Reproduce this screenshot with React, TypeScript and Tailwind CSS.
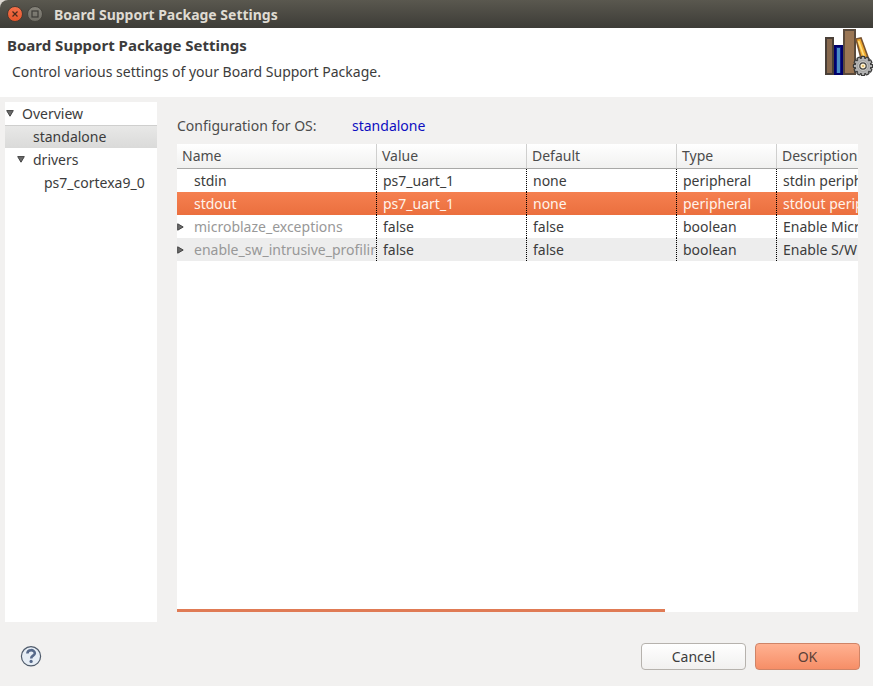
import React from "react";

type Setting = {
  name: string;
  value: string;
  fallback: string;
  type: string;
  description: string;
  expandable?: boolean;
  selected?: boolean;
};

const settings: Setting[] = [
  { name: "stdin", value: "ps7_uart_1", fallback: "none", type: "peripheral", description: "stdin peripheral" },
  { name: "stdout", value: "ps7_uart_1", fallback: "none", type: "peripheral", description: "stdout peripheral", selected: true },
  { name: "microblaze_exceptions", value: "false", fallback: "false", type: "boolean", description: "Enable MicroBlaze Exceptions", expandable: true },
  { name: "enable_sw_intrusive_profiling", value: "false", fallback: "false", type: "boolean", description: "Enable S/W Intrusive Profiling on Hardware Targets", expandable: true },
];

const columns = ["Name", "Value", "Default", "Type", "Description"];

function DownArrow() {
  return (
    <svg width="8" height="8" viewBox="0 0 8 8" aria-hidden="true">
      <path d="M0.7 0.6 H7.3 L4 6.2 Z" fill="#6b6b6b" stroke="#444" strokeWidth="1" strokeLinejoin="round" />
    </svg>
  );
}

function RightArrow() {
  return (
    <svg width="7" height="8" viewBox="0 0 7 8" aria-hidden="true">
      <path d="M0.7 0.8 V7.2 L6.2 4 Z" fill="#6b6b6b" stroke="#444" strokeWidth="1" strokeLinejoin="round" />
    </svg>
  );
}

function BooksIcon() {
  const teeth = [0, 30, 60, 90, 120, 150, 180, 210, 240, 270, 300, 330];
  return (
    <svg width="48" height="48" viewBox="0 0 48 48" aria-hidden="true">
      <rect x="1" y="10" width="7" height="36" fill="#86684e" stroke="#4a4038" strokeWidth="2" />
      <rect x="10" y="18" width="7" height="28" fill="#0a1c8c" stroke="#00006a" strokeWidth="2" />
      <rect x="12" y="20" width="3" height="25" fill="#4a8cc4" />
      <rect x="19" y="2" width="11" height="44" fill="#9a7654" stroke="#5a4a3c" strokeWidth="2" />
      <path d="M31 11 L36 10 L44 32 L37 34 Z" fill="#f0a92c" stroke="#7a5430" strokeWidth="1.6" />
      <path d="M33.5 13 L40 31" stroke="#ffdf80" strokeWidth="1.8" />
      <g transform="translate(38 38)">
        {teeth.map((a) => (
          <rect key={a} x="-1.7" y="-9.6" width="3.4" height="4" rx="0.8" fill="#aeaeae" stroke="#3a3a3a" strokeWidth="1.2" transform={`rotate(${a})`} />
        ))}
        <circle r="7.4" fill="#b4b4b4" />
        <circle r="5.4" fill="#c9c9c6" stroke="#989898" strokeWidth="0.8" />
        <circle r="3.2" fill="#fff2cf" stroke="#444" strokeWidth="1.2" />
        <circle r="1.1" fill="#dcb45c" />
      </g>
    </svg>
  );
}

export default function App() {
  return (
    <div className="flex min-h-screen flex-col bg-[#f2f1f0] font-['Noto_Sans',sans-serif] text-sm leading-5 text-[#3c3c3c]">
      <div className="bg-[#dcd8d2]">
        <div className="flex h-7 items-center gap-1 rounded-tl-lg bg-linear-to-b from-[#5a584f] to-[#3d3c37] px-[7px]">
          <button aria-label="Close" className="flex size-4 shrink-0 items-center justify-center rounded-full border border-[#4a3a30] bg-linear-to-b from-[#f4704a] to-[#e8562a]">
            <svg width="6" height="6" viewBox="0 0 6 6" aria-hidden="true">
              <path d="M0.5 0.5 L5.5 5.5 M5.5 0.5 L0.5 5.5" stroke="#4a2a1c" strokeWidth="1.2" />
            </svg>
          </button>
          <button aria-label="Maximize" className="flex size-4 shrink-0 items-center justify-center rounded-full border border-[#45433d] bg-linear-to-b from-[#85837a] to-[#706e66]">
            <svg width="8" height="8" viewBox="0 0 8 8" aria-hidden="true">
              <rect x="1" y="1" width="6" height="6" fill="none" stroke="#3c3b37" strokeWidth="1.2" />
            </svg>
          </button>
          <span className="pt-px pl-[7px] font-bold text-[#dfdbd2]">Board Support Package Settings</span>
        </div>
      </div>

      <header className="flex items-start justify-between bg-white">
        <div className="pt-[7px] pb-[15px] pl-[7px]">
          <h1 className="text-[15px] leading-5 font-bold">Board Support Package Settings</h1>
          <p className="pt-[7px] pl-[5px]">Control various settings of your Board Support Package.</p>
        </div>
        <BooksIcon />
      </header>

      <div className="flex flex-1 gap-5 pt-[5px] pr-[15px] pl-[5px]">
        <nav className="w-[152px] shrink-0 bg-white text-[#3c3c3c]">
          <ul>
            <li className="flex h-[23px] items-center gap-2 pl-px">
              <DownArrow />
              <span>Overview</span>
            </li>
            <li className="flex h-[23px] items-center border-t border-[#cfcfce] bg-linear-to-b from-[#e8e8e7] to-[#dadad9] pl-7">
              standalone
            </li>
            <li className="flex h-[23px] items-center gap-2 pl-3">
              <DownArrow />
              <span>drivers</span>
            </li>
            <li className="flex h-[23px] items-center pl-[39px]">ps7_cortexa9_0</li>
          </ul>
        </nav>

        <main className="flex min-w-0 flex-1 flex-col pt-3.5 pb-2.5">
          <div className="flex h-7 items-start">
            <span className="w-[175px] shrink-0 text-[#4c4c4c]">Configuration for OS:</span>
            <span className="text-[#0d0dc0]">standalone</span>
          </div>
          <div className="flex flex-1 flex-col justify-between overflow-hidden bg-white">
            <table className="w-[950px] table-fixed border-separate border-spacing-0 text-left">
              <colgroup>
                <col className="w-[200px]" />
                <col className="w-[150px]" />
                <col className="w-[150px]" />
                <col className="w-[100px]" />
                <col />
              </colgroup>
              <thead>
                <tr className="h-[25px] bg-linear-to-b from-white to-[#f0f0ef]">
                  {columns.map((c) => (
                    <th key={c} scope="col" className="border-r border-b border-r-[#cfcfce] border-b-[#a8a8a7] px-[5px] py-0 font-normal text-[#4c4c4c]">
                      {c}
                    </th>
                  ))}
                </tr>
              </thead>
              <tbody>
                {settings.map((s) => (
                  <tr
                    key={s.name}
                    className={
                      s.selected
                        ? "h-[23px] bg-linear-to-b from-[#f58050] to-[#eb6f3e] text-[#fff3ea]"
                        : "h-[23px] last:bg-[#ededed]"
                    }
                  >
                    <td className="overflow-hidden border-r border-dotted border-black p-0 whitespace-nowrap">
                      <div className="flex items-center">
                        <span className="w-[17px] shrink-0">{s.expandable && <RightArrow />}</span>
                        <span className={s.expandable ? "min-w-0 flex-1 overflow-hidden text-[#989898]" : "min-w-0 flex-1"}>{s.name}</span>
                      </div>
                    </td>
                    <td className="border-r border-dotted border-black py-0 pl-1.5">{s.value}</td>
                    <td className="border-r border-dotted border-black py-0 pl-1.5">{s.fallback}</td>
                    <td className="border-r border-dotted border-black py-0 pl-1.5">{s.type}</td>
                    <td className="py-0 pl-1.5 whitespace-nowrap">{s.description}</td>
                  </tr>
                ))}
              </tbody>
            </table>
            <div className="h-[3px] w-[488px] bg-[#e07b55]" />
          </div>
        </main>
      </div>

      <footer className="flex items-center justify-between pt-[21px] pr-[13px] pb-4 pl-5">
        <button aria-label="Help">
          <svg width="22" height="22" viewBox="0 0 22 22" aria-hidden="true">
            <circle cx="11" cy="10.3" r="9.6" fill="#e6edf5" stroke="#4f5b6b" strokeWidth="1.2" />
            <path d="M7.4 7.6 C7.4 3 14.8 3.2 14.8 7.2 C14.8 9.8 11.2 9.6 11.2 12.4" fill="none" stroke="#56698a" strokeWidth="2.6" />
            <circle cx="11.1" cy="15.4" r="1.6" fill="#56698a" />
          </svg>
        </button>
        <div className="flex gap-[9px]">
          <button className="h-[27px] w-[105px] rounded border border-[#b6b2ad] bg-linear-to-b from-white to-[#f1f0ef]">Cancel</button>
          <button className="h-[27px] w-[105px] rounded border border-[#cf8467] bg-linear-to-b from-[#ffb191] to-[#f68e67] text-[#5c4037]">OK</button>
        </div>
      </footer>
    </div>
  );
}
